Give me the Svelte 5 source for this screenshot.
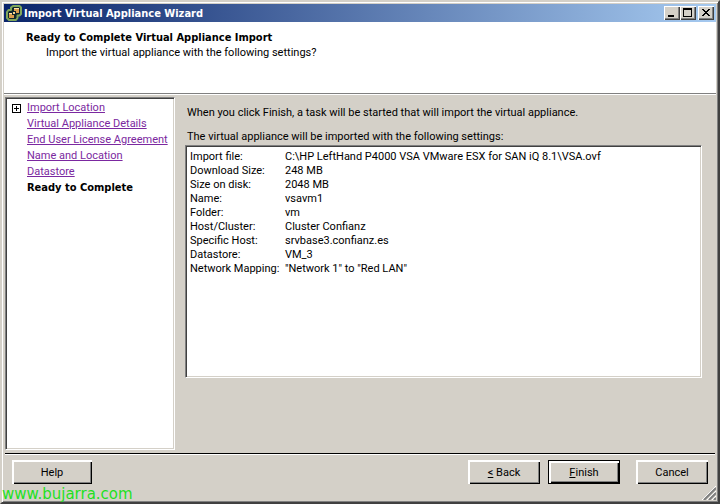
<script lang="ts">
	type Step = { label: string; expandable?: boolean };

	const steps: Step[] = [
		{ label: 'Import Location', expandable: true },
		{ label: 'Virtual Appliance Details' },
		{ label: 'End User License Agreement' },
		{ label: 'Name and Location' },
		{ label: 'Datastore' },
		{ label: 'Ready to Complete' }
	];

	const settings = [
		['Import file:', 'C:\\HP LeftHand P4000 VSA VMware ESX for SAN iQ 8.1\\VSA.ovf'],
		['Download Size:', '248 MB'],
		['Size on disk:', '2048 MB'],
		['Name:', 'vsavm1'],
		['Folder:', 'vm'],
		['Host/Cluster:', 'Cluster Confianz'],
		['Specific Host:', 'srvbase3.confianz.es'],
		['Datastore:', 'VM_3'],
		['Network Mapping:', '"Network 1" to "Red LAN"']
	];

	let current = $state(5);
</script>

<div class="window">
	<header class="titlebar">
		<svg class="logo" width="16" height="16" viewBox="0 0 16 16" aria-hidden="true">
			<path
				d="M7 1h6.500l1.500 1.500v6.500l-1.500 1.500h-2v2.500l-1.500 2h-7l-2-2v-6l1.500-2h2.500v-2.500z"
				fill="#12262c"
				stroke="#7fa65a"
				stroke-width="2"
				stroke-linejoin="round"
			/>
			<path d="M8 3h5v5h-5z" fill="#d89c4c" />
			<path d="M3 8h5v5h-5z" fill="#d89c4c" />
			<path d="M6 6h4v4h-4z" fill="#12262c" />
			<path d="M7 7h2v2h-2z" fill="#f4d48c" />
			<path d="M8 3h5v1h-5zM3 8h3v1h-3z" fill="#fbe6b0" />
		</svg>
		<h1>Import Virtual Appliance Wizard</h1>
		<div class="controls">
			<button aria-label="Minimize">
				<svg width="12" height="10" viewBox="0 0 12 10"><path d="M2 7h6v2h-6z" /></svg>
			</button>
			<button aria-label="Maximize">
				<svg width="12" height="10" viewBox="0 0 12 10">
					<path d="M1 0h9v9h-9zM2 2v6h7v-6z" fill-rule="evenodd" />
				</svg>
			</button>
			<button class="close" aria-label="Close">
				<svg width="12" height="10" viewBox="0 0 12 10">
					<path
						d="M2 1h2v1h1v1h2v-1h1v-1h2v1h-1v1h-1v1h-1v1h1v1h1v1h1v1h-2v-1h-1v-1h-2v1h-1v1h-2v-1h1v-1h1v-1h1v-1h-1v-1h-1v-1h-1z"
					/>
				</svg>
			</button>
		</div>
	</header>

	<section class="intro">
		<h2>Ready to Complete Virtual Appliance Import</h2>
		<p>Import the virtual appliance with the following settings?</p>
	</section>

	<div class="content">
		<nav class="steps">
			{#each steps as step, i}
				<div class="step">
					{#if step.expandable}
						<button class="expand" aria-label="Expand {step.label}">
							<svg width="9" height="9" viewBox="0 0 9 9">
								<path d="M0 0h9v9h-9zM1 1v7h7v-7z" fill-rule="evenodd" />
								<path d="M2 4h5v1h-5zM4 2h1v5h-1z" />
							</svg>
						</button>
					{/if}
					{#if i === current}
						<strong>{step.label}</strong>
					{:else}
						<a href="#step-{i}" onclick={() => (current = i)}>{step.label}</a>
					{/if}
				</div>
			{/each}
		</nav>

		<main>
			<p>When you click Finish, a task will be started that will import the virtual appliance.</p>
			<p>The virtual appliance will be imported with the following settings:</p>
			<dl class="settings">
				{#each settings as [name, value]}
					<dt>{name}</dt>
					<dd>{value}</dd>
				{/each}
			</dl>
		</main>
	</div>

	<footer>
		<button class="action">Help</button>
		<div class="nav-buttons">
			<button class="action"><u>&lt;</u> Back</button>
			<button class="action default"><u>F</u>inish</button>
			<button class="action cancel">Cancel</button>
		</div>
	</footer>

	<div class="watermark">www.bujarra.com</div>
	<svg class="grip" width="14" height="14" viewBox="0 0 14 14" aria-hidden="true">
		<path d="M0 14L14 0M5 14L14 5M10 14L14 10" stroke="#fff" />
		<path d="M2 14L14 2M7 14L14 7M12 14L14 12" stroke="#808080" stroke-width="2" />
	</svg>
</div>

<style>
	:global(body) {
		margin: 0;
	}

	.window,
	.window * {
		box-sizing: border-box;
	}

	.window {
		position: relative;
		display: flex;
		flex-direction: column;
		min-height: 100vh;
		padding: 2px;
		border: 2px solid;
		border-color: #d4d0c8 #404040 #404040 #d4d0c8;
		box-shadow:
			inset 1px 1px #fff,
			inset -1px -1px #808080;
		background: #d4d0c8;
		color: #000;
		font-family: Roboto, sans-serif;
		font-size: 11px;
		line-height: 14px;
	}

	h1,
	h2,
	p,
	dl,
	dd {
		margin: 0;
	}

	h1,
	h2,
	strong {
		font-family: 'DejaVu Sans Condensed', 'DejaVu Sans', sans-serif;
		font-size: 11px;
		font-weight: bold;
	}

	button {
		padding: 0;
		border: 0;
		background: #d4d0c8;
		color: #000;
		font: inherit;
	}

	.titlebar {
		display: flex;
		align-items: center;
		height: 18px;
		padding: 0 2px;
		background: linear-gradient(to right, #0a246a, #a6caf0);
	}

	h1 {
		flex: 1;
		margin-left: 2px;
		padding-top: 1px;
		color: #fff;
	}

	.controls {
		display: flex;
	}

	.controls button {
		display: flex;
		width: 16px;
		height: 14px;
		padding: 2px;
		box-shadow:
			inset 1px 1px #fff,
			inset -1px -1px #404040,
			inset -2px -2px #808080;
	}

	.controls .close {
		margin-left: 2px;
	}

	.intro {
		height: 72px;
		padding: 9px 22px;
		border-bottom: 1px solid #808080;
		box-shadow: 0 1px #fff;
		background: #fff;
	}

	.intro p {
		padding: 1px 20px;
	}

	.content {
		display: flex;
		flex: 1;
		padding: 3px 14px 3px 1px;
	}

	.steps,
	.settings {
		border: 1px solid;
		border-color: #808080 #fff #fff #808080;
		box-shadow:
			inset 1px 1px #404040,
			inset -1px -1px #d4d0c8;
		background: #fff;
	}

	.steps {
		width: 170px;
		padding: 2px 0;
	}

	.step {
		display: grid;
		grid-template-columns: 15px 1fr;
		align-items: center;
		height: 16px;
		padding-left: 6px;
		white-space: nowrap;
	}

	.step a,
	.step strong {
		grid-column: 2;
	}

	.step a {
		color: #7b28a0;
	}

	.expand {
		display: flex;
		width: 9px;
		background: #fff;
	}

	main {
		display: flex;
		flex: 1;
		flex-direction: column;
		gap: 10px;
		padding: 9px 0 0 10px;
	}

	main p {
		padding-left: 2px;
	}

	.settings {
		display: grid;
		grid-template-columns: 95px 1fr;
		align-content: start;
		min-height: 233px;
		margin-top: -9px;
		padding: 4px;
		white-space: nowrap;
	}

	footer {
		display: flex;
		justify-content: space-between;
		height: 47px;
		margin: 0 1px;
		padding: 6px 7px;
		border-top: 1px solid #000;
		box-shadow: inset 0 1px #fff;
	}

	.nav-buttons {
		display: flex;
		gap: 8px;
	}

	.action {
		width: 72px;
		height: 24px;
		padding-top: 1px;
		box-shadow:
			inset 2px 2px #fff,
			inset -1px -1px #000,
			inset -2px -2px #808080;
	}

	footer > .action {
		width: 80px;
	}

	.action.default {
		border: 1px solid #000;
	}

	.cancel {
		margin-left: 8px;
	}

	.watermark {
		position: absolute;
		bottom: 0;
		left: 0;
		color: #1fe01f;
		font-family: 'DejaVu Sans', sans-serif;
		font-size: 15px;
		line-height: 16px;
	}

	.grip {
		position: absolute;
		right: 2px;
		bottom: 2px;
	}
</style>
